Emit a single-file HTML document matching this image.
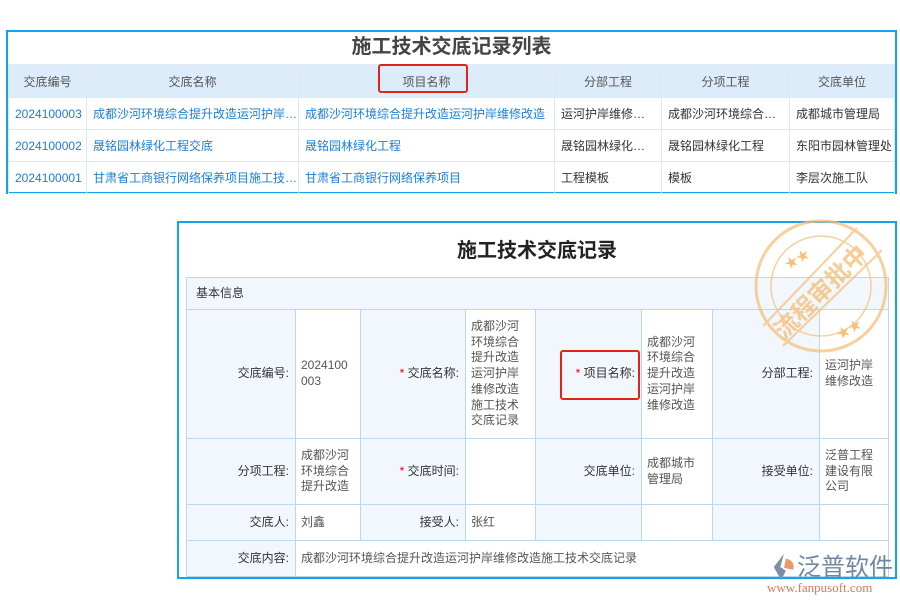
<!DOCTYPE html>
<html><head><meta charset="utf-8"><style>
*{margin:0;padding:0;box-sizing:border-box}
body{width:900px;height:600px;background:#fff;position:relative;overflow:hidden;font-family:"Liberation Sans","Noto Sans CJK SC",sans-serif;font-size:12px;color:#333}
.a{position:absolute}
#top{left:6px;top:30px;width:891px;height:164px;border:2px solid #12a4ec;background:#fff}
#top .t{left:0;top:0;width:100%;height:33px;text-align:center;font-size:20px;font-weight:bold;color:#444;line-height:30px}
table{border-collapse:collapse;position:absolute;table-layout:fixed}
#tt{left:0;top:32px;width:887px}
#tt td,#tt th{border:1px solid #dde8f2;height:32px;padding:0 6px;white-space:nowrap;overflow:hidden;text-overflow:clip}
#tt th{background:#dcecfa;font-weight:normal;color:#555;height:33px}
#tt td{color:#1a7fd4}
#tt td.k{color:#333}
#bot{left:177px;top:221px;width:720px;height:358px;border:2px solid #12a4ec;background:#fff}
#bt{left:0;top:0;width:100%;text-align:center;font-size:20px;font-weight:bold;color:#222;line-height:56px}
#dt{left:7px;top:54px;width:703px}
#dt td{border:1px solid #bcd8ef;vertical-align:middle;line-height:15.7px;color:#555}
#dt td.l{background:#f1f7fd;text-align:right;padding-right:6px;color:#333}
#dt td.v{padding-left:5px}
.s{color:#e00}
.box{border:2px solid #e2231a;border-radius:3px}
</style></head><body>
<div id="top" class="a">
<div class="t a">施工技术交底记录列表</div>
<table id="tt">
<colgroup><col style="width:78px"><col style="width:212px"><col style="width:256px"><col style="width:107px"><col style="width:128px"><col></colgroup>
<tr><th>交底编号</th><th>交底名称</th><th>项目名称</th><th>分部工程</th><th>分项工程</th><th>交底单位</th></tr>
<tr><td>2024100003</td><td>成都沙河环境综合提升改造运河护岸…</td><td>成都沙河环境综合提升改造运河护岸维修改造</td><td class="k">运河护岸维修…</td><td class="k">成都沙河环境综合…</td><td class="k">成都城市管理局</td></tr>
<tr><td>2024100002</td><td>晟铭园林绿化工程交底</td><td>晟铭园林绿化工程</td><td class="k">晟铭园林绿化…</td><td class="k">晟铭园林绿化工程</td><td class="k">东阳市园林管理处</td></tr>
<tr><td>2024100001</td><td>甘肃省工商银行网络保养项目施工技…</td><td>甘肃省工商银行网络保养项目</td><td class="k">工程模板</td><td class="k">模板</td><td class="k">李层次施工队</td></tr>
</table>
</div>
<div class="a box" style="left:378px;top:64px;width:90px;height:29px"></div>

<div id="bot" class="a">
<div id="bt" class="a">施工技术交底记录</div>
<table id="dt">
<colgroup><col style="width:109px"><col style="width:65px"><col style="width:105px"><col style="width:70px"><col style="width:106px"><col style="width:71px"><col style="width:107px"><col></colgroup>
<tr><td colspan="8" style="height:32px;background:#f1f7fd;padding-left:9px;color:#333">基本信息</td></tr>
<tr style="height:129px"><td class="l">交底编号:</td><td class="v">2024100<br>003</td><td class="l"><span class="s">* </span>交底名称:</td><td class="v">成都沙河<br>环境综合<br>提升改造<br>运河护岸<br>维修改造<br>施工技术<br>交底记录</td><td class="l"><span class="s">* </span>项目名称:</td><td class="v">成都沙河<br>环境综合<br>提升改造<br>运河护岸<br>维修改造</td><td class="l">分部工程:</td><td class="v">运河护岸<br>维修改造</td></tr>
<tr style="height:66px"><td class="l">分项工程:</td><td class="v">成都沙河<br>环境综合<br>提升改造</td><td class="l"><span class="s">* </span>交底时间:</td><td class="v"></td><td class="l">交底单位:</td><td class="v">成都城市<br>管理局</td><td class="l">接受单位:</td><td class="v">泛普工程<br>建设有限<br>公司</td></tr>
<tr style="height:36px"><td class="l">交底人:</td><td class="v">刘鑫</td><td class="l">接受人:</td><td class="v">张红</td><td class="l"></td><td class="v"></td><td class="l"></td><td class="v"></td></tr>
<tr style="height:36px"><td class="l">交底内容:</td><td class="v" colspan="7">成都沙河环境综合提升改造运河护岸维修改造施工技术交底记录</td></tr>
</table>
</div>
<div class="a box" style="left:560px;top:350px;width:80px;height:50px"></div>

<svg class="a" style="left:745px;top:218px" width="155" height="150" viewBox="0 0 155 150">
<g fill="none" stroke="#f5c17a" opacity=".75">
<circle cx="76" cy="68" r="65" stroke-width="3"/>
<circle cx="76" cy="68" r="50" stroke-width="1.5"/>
<line x1="18" y1="108" x2="112" y2="10" stroke-width="2"/>
<line x1="38" y1="128" x2="137" y2="32" stroke-width="2"/>
</g>
<text x="76" y="82" fill="#f5c17a" opacity=".8" font-size="24" font-weight="bold" text-anchor="middle" transform="rotate(-45 76 74)" font-family="Noto Sans CJK SC,sans-serif">流程审批中</text>
<text x="40" y="48" fill="#f5c17a" font-size="13" transform="rotate(-30 48 44)">★★</text>
<text x="92" y="118" fill="#f5c17a" font-size="13" transform="rotate(-30 100 114)">★★</text>
</svg>

<svg class="a" style="left:770px;top:552px" width="28" height="30" viewBox="0 0 30 32"><path d="M15 2 L4 16 L12 30 L17 20 L11 16 Z" fill="#7b8fa8"/><path d="M17 7 Q27 9 25 19 L15 17 Z" fill="#e89a6b"/></svg>
<div class="a" style="left:797px;top:549px;font-size:24px;color:#6f86a6;white-space:nowrap;font-family:'Noto Sans CJK SC',sans-serif;line-height:32px">泛普软件</div>
<div class="a" style="left:767px;top:580px;font-size:13px;color:#d4775a;white-space:nowrap;font-family:'Liberation Serif',serif">www.fanpusoft.com</div>
</body></html>
